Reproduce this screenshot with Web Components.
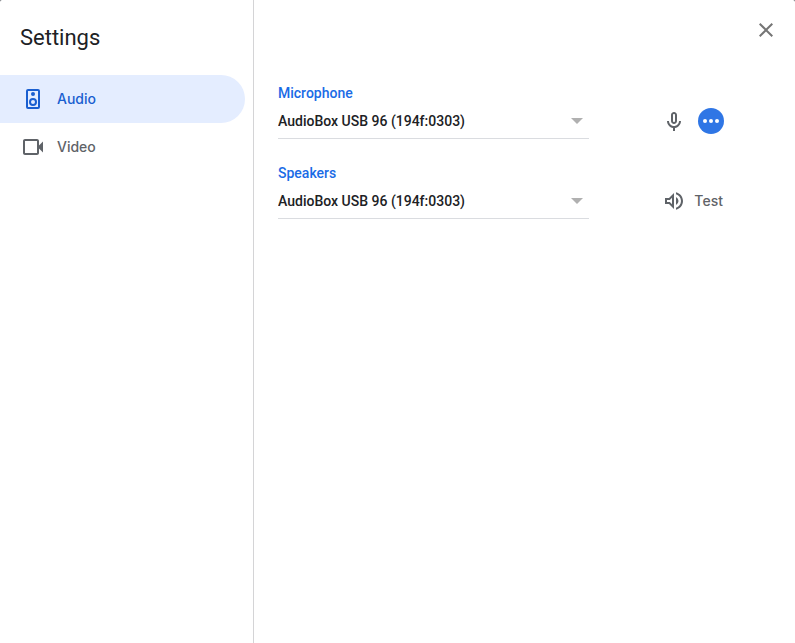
<!DOCTYPE html>
<html lang="en">
<head>
<meta charset="utf-8">
<title>Settings</title>
<style>
html { background: #5f6368; }
body { margin: 0; font-family: Roboto, "Liberation Sans", sans-serif; font-size: 14px; line-height: 20px; color: #202124; }
</style>
</head>
<body>
<settings-dialog>
  <nav-item slot="nav" icon="speaker" selected>Audio</nav-item>
  <nav-item slot="nav" icon="camera">Video</nav-item>
  <device-row label="Microphone" device="AudioBox USB 96 (194f:0303)">
    <ui-icon name="mic"></ui-icon>
    <level-badge></level-badge>
  </device-row>
  <device-row label="Speakers" device="AudioBox USB 96 (194f:0303)">
    <test-button>Test</test-button>
  </device-row>
</settings-dialog>
<script>
const ICONS = {
  speaker: '<path fill-rule="evenodd" d="M7 2h10a2 2 0 0 1 2 2v16a2 2 0 0 1-2 2H7a2 2 0 0 1-2-2V4a2 2 0 0 1 2-2zM7 4v16h10V4z"/><circle cx="12" cy="7" r="2"/><path fill-rule="evenodd" d="M12 11a4 4 0 1 0 0 8 4 4 0 0 0 0-8zm0 2a2 2 0 1 1 0 4 2 2 0 0 1 0-4z"/>',
  camera: '<path fill-rule="evenodd" d="M18 10.5V6c0-1.100-.9-2-2-2H4c-1.100 0-2 .9-2 2v12c0 1.100.9 2 2 2h12c1.100 0 2-.9 2-2v-4.500l4 4v-11zM16 18H4V6h12z"/>',
  mic: '<path d="M12 15c1.660 0 3-1.340 3-3V6c0-1.660-1.340-3-3-3S9 4.340 9 6v6c0 1.660 1.340 3 3 3zm-1-9c0-.55.45-1 1-1s1 .45 1 1v6c0 .55-.45 1-1 1s-1-.45-1-1zm6 6c0 2.760-2.240 5-5 5s-5-2.240-5-5H5c0 3.530 2.610 6.430 6 6.920V22h2v-3.080c3.390-.49 6-3.390 6-6.920z"/>',
  volume: '<path d="M3 9v6h4l5 5V4L7 9zm7-.17v6.340L7.830 13H5v-2h2.830zM16.500 12A4.500 4.500 0 0 0 14 7.970v8.050A4.500 4.500 0 0 0 16.500 12zM14 3.230v2.060c2.890.86 5 3.540 5 6.710s-2.110 5.850-5 6.710v2.060c4.010-.91 7-4.490 7-8.770s-2.990-7.860-7-8.770z"/>',
  close: '<path d="M19 6.410L17.590 5 12 10.590 6.410 5 5 6.410 10.590 12 5 17.590 6.410 19 12 13.410 17.590 19 19 17.590 13.410 12z"/>',
  arrow: '<path d="M6 9h12l-6 6z"/>'
};

class UiIcon extends HTMLElement {
  connectedCallback() {
    if (this.shadowRoot) return;
    this.attachShadow({ mode: 'open' }).innerHTML = `
      <style>
        :host { display: block; flex: none; width: var(--icon-size, 24px); height: var(--icon-size, 24px); }
        svg { display: block; width: 100%; height: 100%; fill: currentColor; }
      </style>
      <svg viewBox="0 0 24 24" aria-hidden="true">${ICONS[this.getAttribute('name')]}</svg>`;
  }
}

class NavItem extends HTMLElement {
  connectedCallback() {
    if (this.shadowRoot) return;
    this.attachShadow({ mode: 'open' }).innerHTML = `
      <style>
        :host { display: block; color: #5f6368; }
        button { display: flex; align-items: center; gap: 12px; width: 100%; height: 48px; padding: 0 21px; border: 0;
          border-radius: 0 24px 24px 0; background: none; color: inherit; font: 500 14px/20px Inter, sans-serif; text-align: left; cursor: pointer; }
        :host([selected]) button { background: #e4edff; color: #1a5fd0; }
      </style>
      <button type="button"><ui-icon name="${this.getAttribute('icon')}"></ui-icon><span><slot></slot></span></button>`;
  }
}

class LevelBadge extends HTMLElement {
  connectedCallback() {
    if (this.shadowRoot) return;
    this.attachShadow({ mode: 'open' }).innerHTML = `
      <style>
        :host { display: flex; align-items: center; justify-content: center; gap: 2px; width: 26px; height: 26px; border-radius: 50%; background: #2f76e5; }
        i { width: 4px; height: 4px; border-radius: 50%; background: #fff; }
      </style>
      <i></i><i></i><i></i>`;
  }
}

class TestButton extends HTMLElement {
  connectedCallback() {
    if (this.shadowRoot) return;
    this.attachShadow({ mode: 'open' }).innerHTML = `
      <style>
        button { display: flex; align-items: center; gap: 8px; height: 36px; padding: 0; border: 0; background: none;
          color: inherit; font: 500 14px/20px Inter, sans-serif; cursor: pointer; }
      </style>
      <button type="button"><ui-icon name="volume"></ui-icon><span><slot></slot></span></button>`;
  }
}

class DeviceRow extends HTMLElement {
  connectedCallback() {
    if (this.shadowRoot) return;
    this.attachShadow({ mode: 'open' }).innerHTML = `
      <style>
        :host { display: grid; grid-template-columns: minmax(0, 12fr) minmax(0, 7fr); align-items: end; }
        label { display: block; color: #1a6be6; font-weight: 500; }
        .field { display: grid; grid-template-columns: minmax(0, 1fr) auto; align-items: center; border-bottom: 1px solid #dadce0; }
        select { grid-area: 1 / 1 / 2 / 3; width: 100%; height: 35px; margin: 0; padding: 0; border: 0; background: none;
          appearance: none; color: #202124; font: 500 14px/20px Roboto, sans-serif; cursor: pointer; }
        ui-icon { grid-area: 1 / 2; color: #b0b0b0; pointer-events: none; }
        .actions { display: flex; align-items: center; gap: 12px; height: 36px; padding-left: 73px; color: #5f6368; }
      </style>
      <div>
        <label for="device">${this.getAttribute('label')}</label>
        <div class="field">
          <select id="device"><option>${this.getAttribute('device')}</option></select>
          <ui-icon name="arrow"></ui-icon>
        </div>
      </div>
      <div class="actions"><slot></slot></div>`;
  }
}

class SettingsDialog extends HTMLElement {
  connectedCallback() {
    if (this.shadowRoot) return;
    this.attachShadow({ mode: 'open' }).innerHTML = `
      <style>
        :host { display: grid; grid-template-columns: 254px minmax(0, 1fr); min-height: 100vh; background: #fff; border-radius: 2px 2px 0 0; }
        aside { border-right: 1px solid #d4d4d6; }
        h1 { margin: 0; padding: 22px 20px 21px; font: 400 22px/32px Roboto, sans-serif; }
        nav { padding-right: 8px; }
        header { display: flex; justify-content: flex-end; padding: 18px 17px 41px; }
        header button { display: block; padding: 0; border: 0; background: none; color: #757575; cursor: pointer; }
        .rows { display: grid; gap: 24px; padding: 0 24px; }
      </style>
      <aside>
        <h1>Settings</h1>
        <nav><slot name="nav"></slot></nav>
      </aside>
      <main>
        <header><button type="button" aria-label="Close"><ui-icon name="close"></ui-icon></button></header>
        <div class="rows"><slot></slot></div>
      </main>`;
  }
}

customElements.define('ui-icon', UiIcon);
customElements.define('nav-item', NavItem);
customElements.define('level-badge', LevelBadge);
customElements.define('test-button', TestButton);
customElements.define('device-row', DeviceRow);
customElements.define('settings-dialog', SettingsDialog);
</script>
</body>
</html>
